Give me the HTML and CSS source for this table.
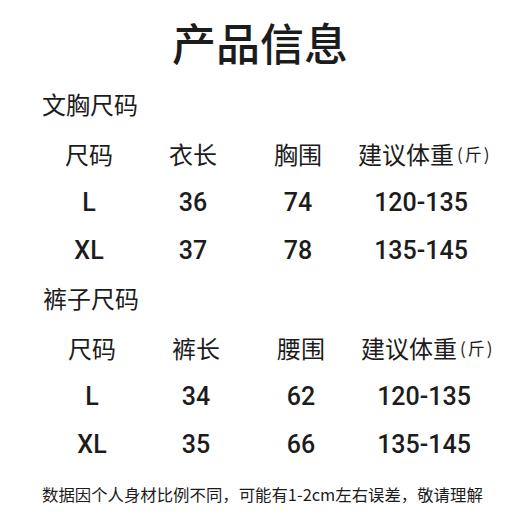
FILE: index.html
```html
<!DOCTYPE html>
<html lang="zh-CN">
<head>
<meta charset="utf-8">
<title>产品信息</title>
<link rel="stylesheet" href="styles.css">
</head>
<body>
<main class="page">
  <h1 class="title">产品信息</h1>

  <section class="section">
    <h2 class="section-label">文胸尺码</h2>
    <div class="size-table">
      <div class="cell head">尺码</div>
      <div class="cell head">衣长</div>
      <div class="cell head">胸围</div>
      <div class="cell head weight-head">建议体重<span class="unit">(斤)</span></div>

      <div class="cell num">L</div>
      <div class="cell num">36</div>
      <div class="cell num">74</div>
      <div class="cell num">120-135</div>

      <div class="cell num">XL</div>
      <div class="cell num">37</div>
      <div class="cell num">78</div>
      <div class="cell num">135-145</div>
    </div>
  </section>

  <section class="section section--second">
    <h2 class="section-label">裤子尺码</h2>
    <div class="size-table">
      <div class="cell head">尺码</div>
      <div class="cell head">裤长</div>
      <div class="cell head">腰围</div>
      <div class="cell head weight-head">建议体重<span class="unit">(斤)</span></div>

      <div class="cell num">L</div>
      <div class="cell num">34</div>
      <div class="cell num">62</div>
      <div class="cell num">120-135</div>

      <div class="cell num">XL</div>
      <div class="cell num">35</div>
      <div class="cell num">66</div>
      <div class="cell num">135-145</div>
    </div>
  </section>

  <p class="note">数据因个人身材比例不同，可能有1-2cm左右误差，敬请理解</p>
</main>
</body>
</html>
```

FILE: styles.css
```css
html, body {
  margin: 0;
  padding: 0;
  background: #ffffff;
}

body {
  width: 520px;
  height: 520px;
  overflow: hidden;
  color: #1c1c1c;
  font-family: "Noto Sans CJK SC", "Noto Sans", sans-serif;
}

.page {
  display: flex;
  flex-direction: column;
}

.title {
  margin: 18px 0 13px;
  height: 48px;
  line-height: 48px;
  font-size: 44px;
  font-weight: 500;
  text-align: center;
}

.section-label {
  margin: 0;
  height: 50px;
  line-height: 50px;
  padding-left: 42px;
  font-size: 24px;
  font-weight: 400;
}

.size-table {
  display: grid;
  grid-template-columns: 104px 104px 106px 140px;
  grid-auto-rows: 48px;
  margin-left: 37px;
}

.section--second .section-label {
  padding-left: 43px;
}

.section--second .size-table {
  margin-left: 40px;
}

.cell {
  display: flex;
  align-items: center;
  justify-content: center;
  white-space: nowrap;
}

.head {
  font-size: 24px;
  font-weight: 400;
}

.weight-head {
  justify-content: flex-start;
  padding-left: 7px;
}

.unit {
  font-size: 17px;
  margin-left: 3px;
  letter-spacing: 2px;
}

.num {
  font-family: Roboto, "Liberation Sans", sans-serif;
  font-size: 25px;
  font-weight: 500;
  padding-top: 2px;
}

.note {
  margin: 3px 0 0;
  height: 48px;
  line-height: 48px;
  padding-left: 42px;
  font-size: 16.4px;
  white-space: nowrap;
}
```
